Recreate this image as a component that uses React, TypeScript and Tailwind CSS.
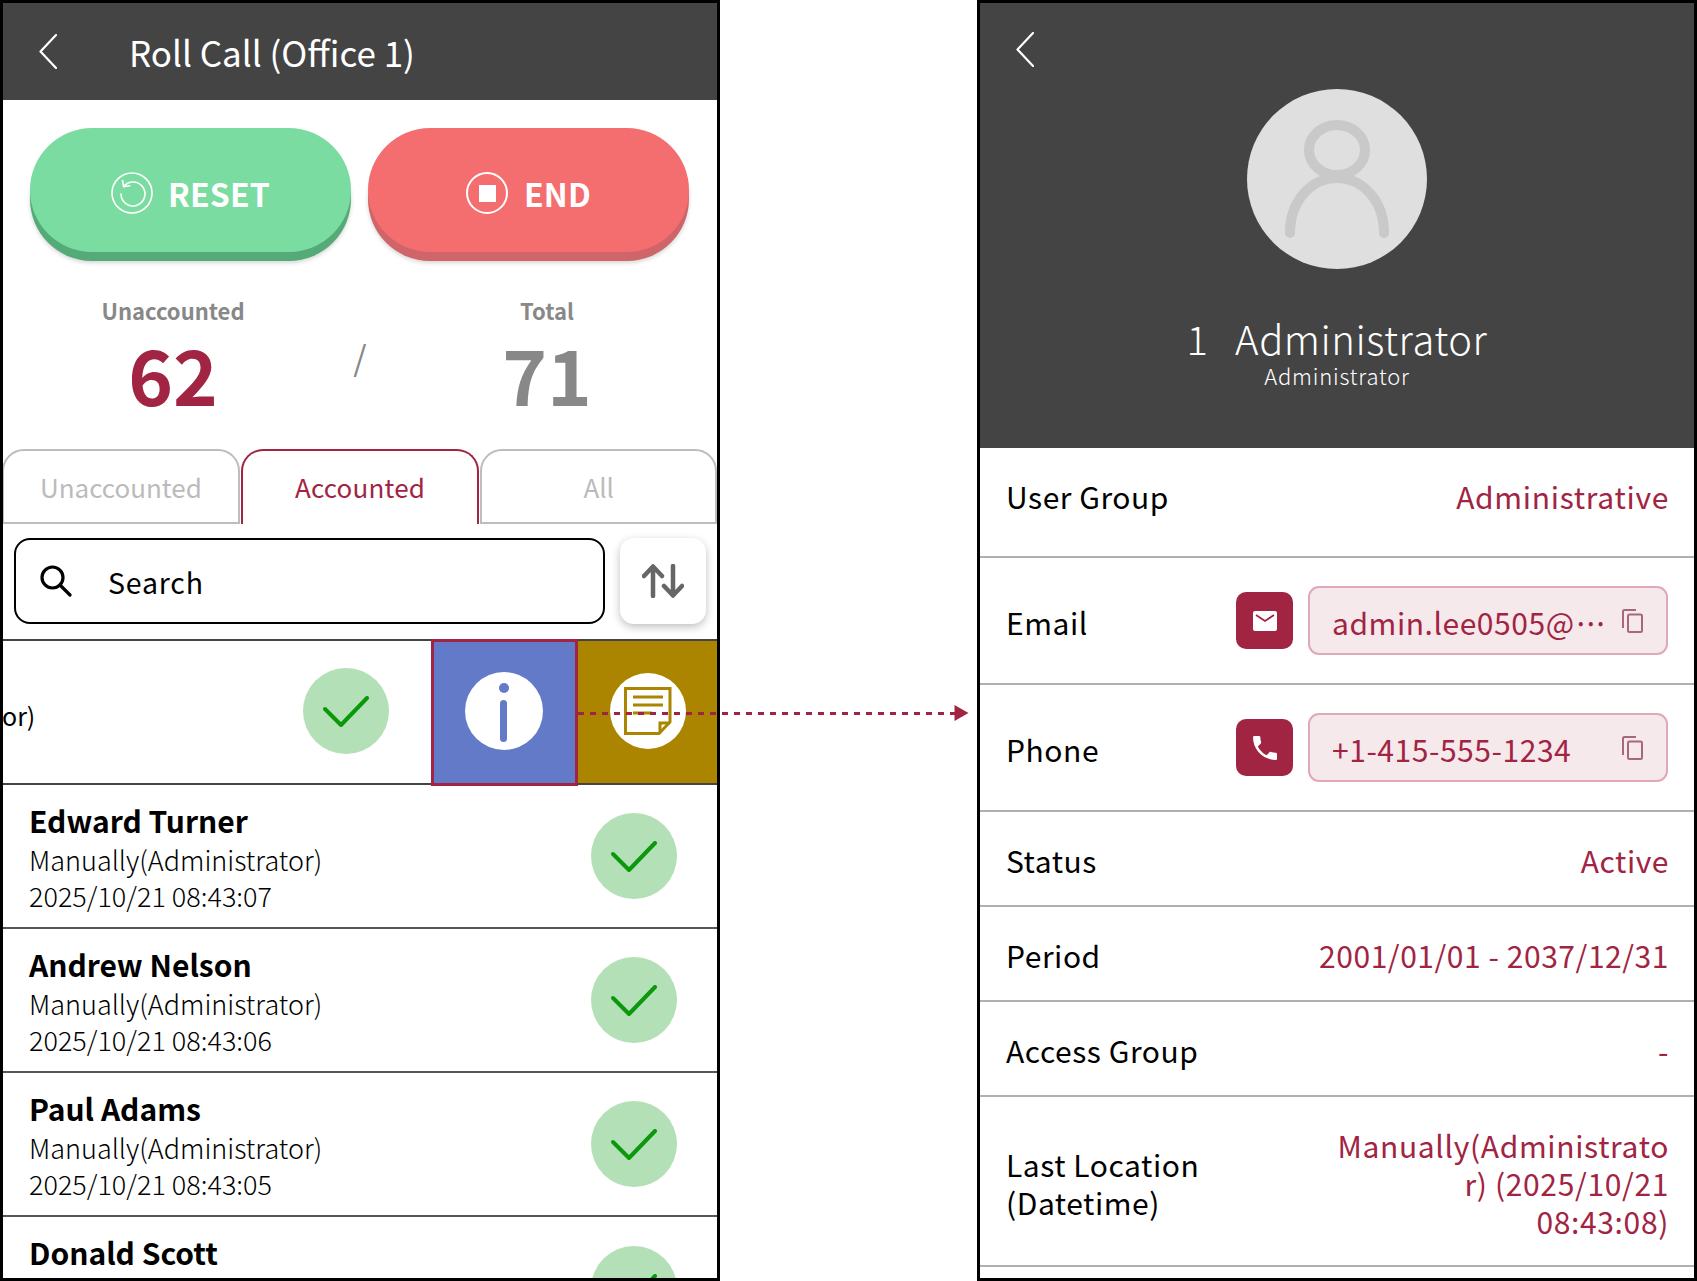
const FONT = "font-['Noto_Sans_CJK_JP','Noto_Sans',sans-serif]";

const people = [
  { name: 'Edward Turner', time: '2025/10/21 08:43:07' },
  { name: 'Andrew Nelson', time: '2025/10/21 08:43:06' },
  { name: 'Paul Adams', time: '2025/10/21 08:43:05' },
];

const Back = ({ className }: { className: string }) => (
  <svg viewBox="0 0 18 35" className={className} fill="none" stroke="white" strokeWidth="2.2" strokeLinecap="round" strokeLinejoin="round">
    <path d="M17 1 L1.5 17.5 L17 34" />
  </svg>
);

const Check = ({ className = '' }: { className?: string }) => (
  <div className={`w-[86px] h-[86px] rounded-full bg-[#b3e0b6] flex items-center justify-center shrink-0 ${className}`}>
    <svg viewBox="0 0 46 31" className="w-[46px] h-[31px]" fill="none" stroke="#0b990b" strokeWidth="4" strokeLinecap="round" strokeLinejoin="round">
      <path d="M2 13 L18 29 L44 2" />
    </svg>
  </div>
);

const CopyIcon = () => (
  <svg viewBox="0 0 21 24" className="w-[21px] h-[24px] shrink-0" fill="none" stroke="#a8677a" strokeWidth="2">
    <path d="M1 19 V2.5 Q1 1 2.5 1 H14" />
    <rect x="6" y="5.5" width="14" height="17.5" rx="1.5" />
  </svg>
);

const Row = ({ label, value }: { label: string; value: string }) => (
  <div className="h-[95px] flex items-center justify-between pl-[26px] pr-[25px] pt-[4px] border-b-2 border-[#b0b0b0]">
    <span className="text-[30px] tracking-[0.55px] text-black">{label}</span>
    <span className="text-[30px] tracking-[0.55px] text-[#a12443]">{value}</span>
  </div>
);

const ContactRow = ({ label, value, icon, textPad }: { label: string; value: React.ReactNode; icon: React.ReactNode; textPad: string }) => (
  <div className="h-[127px] flex items-center pl-[26px] pr-[26px] border-b-2 border-[#b0b0b0]">
    <span className={`text-[30px] tracking-[0.55px] text-black leading-none flex-1 ${textPad}`}>{label}</span>
    <div className="w-[57px] h-[57px] rounded-[10px] bg-[#a12443] flex items-center justify-center">{icon}</div>
    <div className="w-[360px] h-[69px] ml-[15px] rounded-[11px] bg-[#f6e9ec] border-2 border-[#dfa9b7] flex items-center justify-between pl-[22px] pr-[23px] text-[#a12443]">
      <span className={`text-[30px] tracking-[0.55px] leading-none whitespace-nowrap ${textPad}`}>{value}</span>
      <CopyIcon />
    </div>
  </div>
);

const RollCall = () => (
  <div className="relative w-[720px] h-[1281px] border-3 border-black bg-white overflow-hidden shrink-0">
    <div className="h-[97px] bg-[#444444] flex items-center pl-[36px]">
      <Back className="w-[18px] h-[35px]" />
      <span className="ml-[72px] text-[35px] text-white leading-none">Roll Call (Office 1)</span>
    </div>

    <div className="flex gap-[17px] pl-[27px] pt-[28px]">
      <button className="w-[321px] h-[124px] pt-[6px] rounded-[62px] bg-[#7bdca1] shadow-[0_9px_0_#55ab78,0_11px_4px_#0000002a] flex items-center justify-center gap-[15px] text-white text-[32px] font-bold tracking-[0.2px]">
        <svg viewBox="0 0 42 42" className="w-[42px] h-[42px]" fill="none" stroke="white" strokeWidth="1.6">
          <circle cx="21" cy="21" r="20" />
          <path d="M13 14 A12 12 0 1 1 10 22" strokeLinecap="round" />
          <path d="M11.5 8.5 L12.6 14.6 L18.8 13.8" strokeLinecap="round" strokeLinejoin="round" />
        </svg>
        <span className="leading-none">RESET</span>
      </button>
      <button className="w-[321px] h-[124px] pt-[6px] rounded-[62px] bg-[#f46e70] shadow-[0_9px_0_#cf6568,0_11px_4px_#0000002a] flex items-center justify-center gap-[16px] text-white text-[32px] font-bold tracking-[0.2px]">
        <svg viewBox="0 0 42 42" className="w-[42px] h-[42px]" fill="none" stroke="white" strokeWidth="2">
          <circle cx="21" cy="21" r="20" />
          <rect x="13" y="13" width="17" height="17" fill="white" stroke="none" />
        </svg>
        <span className="leading-none">END</span>
      </button>
    </div>

    <div className="flex mt-[30px] h-[167px] text-[#888888]">
      <div className="w-[340px] flex flex-col items-center">
        <span className="text-[22px] font-bold leading-[34px] pt-[11px]">Unaccounted</span>
        <span className="text-[76px] font-bold leading-[78px] text-[#a12443] mt-[7px]">62</span>
      </div>
      <div className="w-[34px] flex justify-center pt-[56px]">
        <span className="text-[34px] leading-[38px]">/</span>
      </div>
      <div className="w-[340px] flex flex-col items-center">
        <span className="text-[22px] font-bold leading-[34px] pt-[11px]">Total</span>
        <span className="text-[76px] font-bold leading-[78px] mt-[7px]">71</span>
      </div>
    </div>

    <div className="flex h-[75px] items-stretch text-[26px]">
      <div className="w-[238px] ml-[-1px] pb-[1px] rounded-t-[22px] border-2 border-[#bdbdbd] flex items-center justify-center text-[#bbbbbb]">Unaccounted</div>
      <div className="w-[239px] ml-[1px] pb-[2px] rounded-t-[22px] border-2 border-b-0 border-[#a12443] flex items-center justify-center text-[#a12443] tracking-[0.2px]">Accounted</div>
      <div className="w-[237px] ml-[1px] pb-[1px] rounded-t-[22px] border-2 border-[#bdbdbd] flex items-center justify-center text-[#bbbbbb]">All</div>
    </div>

    <div className="flex pl-[11px] gap-[15px] mt-[14px]">
      <div className="w-[591px] h-[86px] rounded-[16px] border-2 border-black flex items-center pl-[24px]">
        <svg viewBox="0 0 32 32" className="w-[32px] h-[32px]" fill="none" stroke="black" strokeWidth="3.2">
          <circle cx="12.5" cy="12.5" r="10.5" />
          <path d="M20 20 L30 30" strokeLinecap="round" />
        </svg>
        <span className="ml-[36px] pt-[2px] text-[28.5px] tracking-[0.8px] text-black">Search</span>
      </div>
      <div className="w-[86px] h-[86px] rounded-[14px] bg-white shadow-[0_3px_8px_#00000040] flex items-center justify-center">
        <svg viewBox="0 0 42 34" className="w-[42px] h-[34px]" fill="none" stroke="#666666" strokeWidth="4.5" strokeLinecap="round" strokeLinejoin="round">
          <path d="M11 32 V3 M2 12 L11 2.5 L20 12" />
          <path d="M31 2 V31 M22 22 L31 31.5 L40 22" />
        </svg>
      </div>
    </div>

    <div className="relative h-[146px] mt-[15px] border-t-2 border-b-2 border-[#444444] flex items-center">
      <span className="text-[25px] text-black leading-none mt-[6px] ml-[-1px]">or)</span>
      <Check className="ml-[268px] mb-[2px]" />
      <div className="absolute right-0 top-0 bottom-0 w-[139px] bg-[#ab8400] flex items-center justify-center">
        <div className="w-[76px] h-[76px] mb-[2px] rounded-full bg-white flex items-center justify-center">
          <svg viewBox="0 0 48 48" className="w-[48px] h-[48px]" fill="none" stroke="#ab8400" strokeWidth="3">
            <path d="M1.5 1.5 H46 V35 L35 46.5 H1.5 Z" />
            <path d="M36 46 V36 H46" />
            <path d="M9 10 H39 M9 18 H39 M9 26 H28" />
          </svg>
        </div>
      </div>
      <div className="absolute left-[428px] top-[-2px] w-[147px] h-[147px] border-3 border-[#a12443] bg-[#637ac8] flex items-center justify-center">
        <div className="relative w-[78px] h-[78px] mb-[3px] mr-[2px] rounded-full bg-white">
          <div className="absolute left-[34px] top-[11px] w-[10px] h-[10px] rounded-full bg-[#637ac8]" />
          <div className="absolute left-[35px] top-[28px] w-[7px] h-[42px] rounded-full bg-[#637ac8]" />
        </div>
      </div>
    </div>

    {people.map(p => (
      <div key={p.name} className="h-[144px] flex items-center pl-[26px] pr-[40px] border-b-2 border-[#555555]">
        <div className="flex-1 self-start pt-[17px] text-black">
          <div className="text-[30px] font-bold leading-[36px]">{p.name}</div>
          <div className="text-[27px] leading-[36px] mt-[4px] font-light">Manually(Administrator)</div>
          <div className="text-[27px] leading-[36px] font-light">{p.time}</div>
        </div>
        <Check />
      </div>
    ))}
    <div className="h-[144px] flex items-center pl-[26px] pr-[40px]">
      <div className="flex-1 self-start pt-[17px] text-[30px] font-bold leading-[36px] text-black">Donald Scott</div>
      <Check />
    </div>
  </div>
);

const Profile = () => (
  <div className="w-[720px] h-[1281px] border-3 border-black bg-white overflow-hidden shrink-0">
    <div className="relative h-[445px] bg-[#444444] flex flex-col items-center text-white">
      <div className="absolute left-[36px] top-[29px]">
        <Back className="w-[18px] h-[35px]" />
      </div>
      <div className="w-[180px] h-[180px] rounded-full bg-[#dfdfdf] mt-[86px] flex items-center justify-center">
        <svg viewBox="0 0 104 118" className="w-[104px] h-[118px]" fill="none" stroke="#c9c9c9" strokeWidth="10" strokeLinecap="round">
          <ellipse cx="52" cy="30" rx="28" ry="25" />
          <path d="M5 113 C5 80 27 58 52 58 C77 58 99 80 99 113" />
        </svg>
      </div>
      <div className="text-[40px] leading-[50px] mt-[44px] tracking-[0.5px] whitespace-pre font-light">
        <span className="mr-[8px]">1</span>
        {'  Administrator'}
      </div>
      <div className="text-[22px] leading-[28px] mt-[-2px] tracking-[0.8px] font-light">Administrator</div>
    </div>

    <div className="h-[110px] flex items-center justify-between pl-[26px] pr-[25px] pb-[12px] border-b-2 border-[#b0b0b0]">
      <span className="text-[30px] tracking-[0.55px] text-black">User Group</span>
      <span className="text-[30px] tracking-[0.7px] text-[#a12443]">Administrative</span>
    </div>
    <ContactRow
      label="Email"
      value={
        <>
          admin.lee0505@<span className="tracking-[-7px] ml-[-2px]">···</span>
        </>
      }
      textPad="pt-[3px]"
      icon={
        <svg viewBox="0 0 24 20" className="w-[24px] h-[20px]">
          <path d="M2 0 H22 Q24 0 24 2 V18 Q24 20 22 20 H2 Q0 20 0 18 V2 Q0 0 2 0 Z" fill="white" />
          <path d="M3 4 L12 10 L21 4" fill="none" stroke="#a12443" strokeWidth="1.8" />
        </svg>
      }
    />
    <ContactRow
      label="Phone"
      value="+1-415-555-1234"
      textPad="pt-[3px]"
      icon={
        <svg viewBox="3 3 18 18" className="w-[24px] h-[24px]" fill="white">
          <path d="M6.62 10.79c1.44 2.83 3.76 5.14 6.59 6.59l2.2-2.2c.27-.27.67-.36 1.02-.24 1.12.37 2.33.57 3.57.57.55 0 1 .45 1 1V20c0 .55-.45 1-1 1-9.39 0-17-7.61-17-17 0-.55.45-1 1-1h3.5c.55 0 1 .45 1 1 0 1.25.2 2.45.57 3.57.11.35.03.74-.25 1.02l-2.2 2.2z" />
        </svg>
      }
    />
    <Row label="Status" value="Active" />
    <Row label="Period" value="2001/01/01 - 2037/12/31" />
    <Row label="Access Group" value="-" />
    <div className="h-[170px] flex items-center justify-between pl-[26px] pr-[25px] pt-[3px] border-b-2 border-[#b0b0b0]">
      <span className="text-[30px] tracking-[0.55px] text-black leading-[38px]">
        Last Location
        <br />
        (Datetime)
      </span>
      <span className="text-[30px] tracking-[0.65px] text-[#a12443] leading-[38px] text-right whitespace-nowrap">
        Manually(Administrato
        <br />
        r) (2025/10/21
        <br />
        08:43:08)
      </span>
    </div>
  </div>
);

export default function App() {
  return (
    <div className={`relative w-[1697px] h-[1281px] bg-white overflow-hidden flex justify-between ${FONT}`}>
      <RollCall />
      <Profile />
      {/* dashed pointer from the info button to the detail screen */}
      <div className="absolute left-[578px] top-[712px] w-[378px] h-[3px] bg-[repeating-linear-gradient(90deg,#a12443_0_6px,transparent_6px_12px)]" />
      <svg viewBox="0 0 14 16" className="absolute left-[954px] top-[705px] w-[15px] h-[16px]" fill="#a12443">
        <path d="M0 0 L14 8 L0 16 Z" />
      </svg>
    </div>
  );
}
